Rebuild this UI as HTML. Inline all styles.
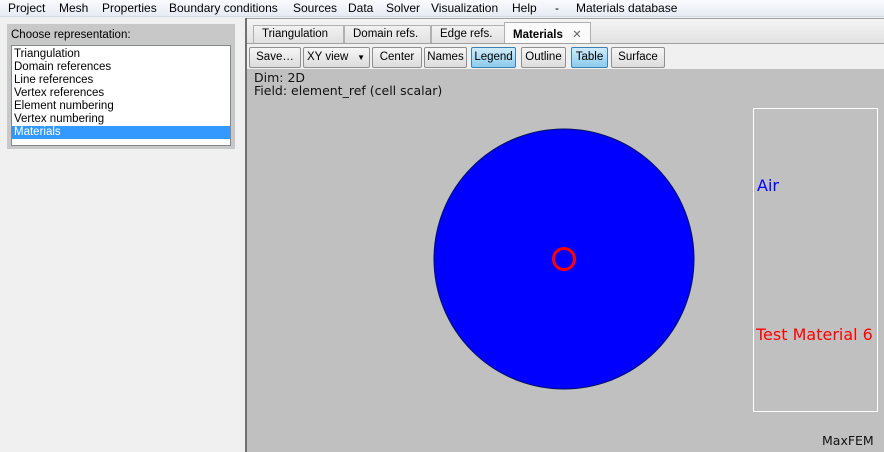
<!DOCTYPE html>
<html><head><meta charset="utf-8"><style>
*{box-sizing:border-box;margin:0;padding:0}
body{width:884px;height:452px;overflow:hidden;background:#f0f0f0;font-family:"Liberation Sans","DejaVu Sans",sans-serif;font-size:12px;color:#000;position:relative}
.menu{position:absolute;left:0;top:0;width:884px;height:17px;background:linear-gradient(#fafbfd,#e6ebf3);border-bottom:1px solid #d5dbe5}
.menu span{position:absolute;top:1px;font-size:12px}
.abs{position:absolute}
.lp{left:7px;top:24px;width:228px;height:125px;background:#c8c8c8}
.list{left:11px;top:45px;width:220px;height:101px;background:#fff;border:1px solid #828790;padding-top:2px}
.list div{height:13px;line-height:13px;padding-left:2px;font-size:11.5px}
.sel{background:#3399ff;color:#fff}
.split{left:245px;top:18px;width:2px;height:434px;background:#707070}
.right{left:247px;top:18px;width:637px;height:434px;background:#c0c0c0}
.tabbar{left:247px;top:18px;width:637px;height:25px;background:linear-gradient(#f4f4f4,#e2e2e2);border-top:1px solid #a0a0a0}
.tab{position:absolute;top:6px;height:18px;border:1px solid #b0b0b0;border-bottom:none;background:linear-gradient(#f2f2f2,#e0e0e0);padding:2px 0 0 8px;font-size:11.5px}
.tb{left:247px;top:43px;width:637px;height:26px;background:#f0f0f0;border-top:1px solid #a0a0a0}
.btn{position:absolute;top:47px;height:21px;border:1px solid #8e8f8f;border-radius:2px;background:linear-gradient(#f6f6f6,#dcdcdc);font-size:11.5px;text-align:center;line-height:19px}
.on{background:linear-gradient(#d0ebf9,#8ccbee);border-color:#3c7fb1}
.txt{font-family:"DejaVu Sans",sans-serif;font-size:12.5px;color:#111}
</style></head><body>
<div class="menu">
<span style="left:8px">Project</span><span style="left:59px">Mesh</span><span style="left:102px">Properties</span><span style="left:169px">Boundary conditions</span><span style="left:293px">Sources</span><span style="left:348px">Data</span><span style="left:386px">Solver</span><span style="left:431px">Visualization</span><span style="left:512px">Help</span><span style="left:555px">-</span><span style="left:576px">Materials database</span>
</div>
<div class="abs lp"></div>
<div class="abs" style="left:11px;top:29px;font-size:11.5px">Choose representation:</div>
<div class="abs list">
<div>Triangulation</div><div>Domain references</div><div>Line references</div><div>Vertex references</div><div>Element numbering</div><div>Vertex numbering</div><div class="sel">Materials</div>
</div>
<div class="abs split"></div>
<div class="abs right"></div>
<div class="abs tabbar">
<div class="tab" style="left:6px;width:91px">Triangulation</div>
<div class="tab" style="left:97px;width:87px">Domain refs.</div>
<div class="tab" style="left:184px;width:74px">Edge refs.</div>
<div class="tab" style="left:257px;width:87px;top:3px;height:22px;background:#fafafa;font-weight:bold;padding-top:4px">Materials <span style="font-weight:normal;color:#666;margin-left:6px">✕</span></div>
</div>
<div class="abs tb"></div>
<div class="btn" style="left:249px;width:52px">Save…</div>
<div class="btn" style="left:303px;width:67px;text-align:left;padding-left:3px">XY view<span style="position:absolute;right:4px;font-size:8px">▼</span></div>
<div class="btn" style="left:372px;width:50px">Center</div>
<div class="btn" style="left:424px;width:43px">Names</div>
<div class="btn on" style="left:471px;width:45px">Legend</div>
<div class="btn" style="left:521px;width:45px">Outline</div>
<div class="btn on" style="left:571px;width:37px">Table</div>
<div class="btn" style="left:611px;width:54px">Surface</div>
<div class="abs txt" style="left:254px;top:70px">Dim: 2D</div>
<div class="abs txt" style="left:254px;top:83px">Field: element_ref (cell scalar)</div>
<svg class="abs" style="left:0;top:0" width="884" height="452">
<circle cx="564" cy="259" r="130" fill="#0000ff" stroke="#001060" stroke-width="1"/>
<circle cx="564" cy="259" r="10.5" fill="none" stroke="#ff0000" stroke-width="3"/>
<rect x="753.5" y="108.5" width="124" height="303" fill="none" stroke="#fff" stroke-width="1"/>
</svg>
<div class="abs txt" style="left:757px;top:176px;color:#0000ff;font-size:16px">Air</div>
<div class="abs txt" style="left:756px;top:325px;color:#ff0000;font-size:16px">Test Material 6</div>
<div class="abs txt" style="left:822px;top:433px;font-size:12.5px">MaxFEM</div>
</body></html>
